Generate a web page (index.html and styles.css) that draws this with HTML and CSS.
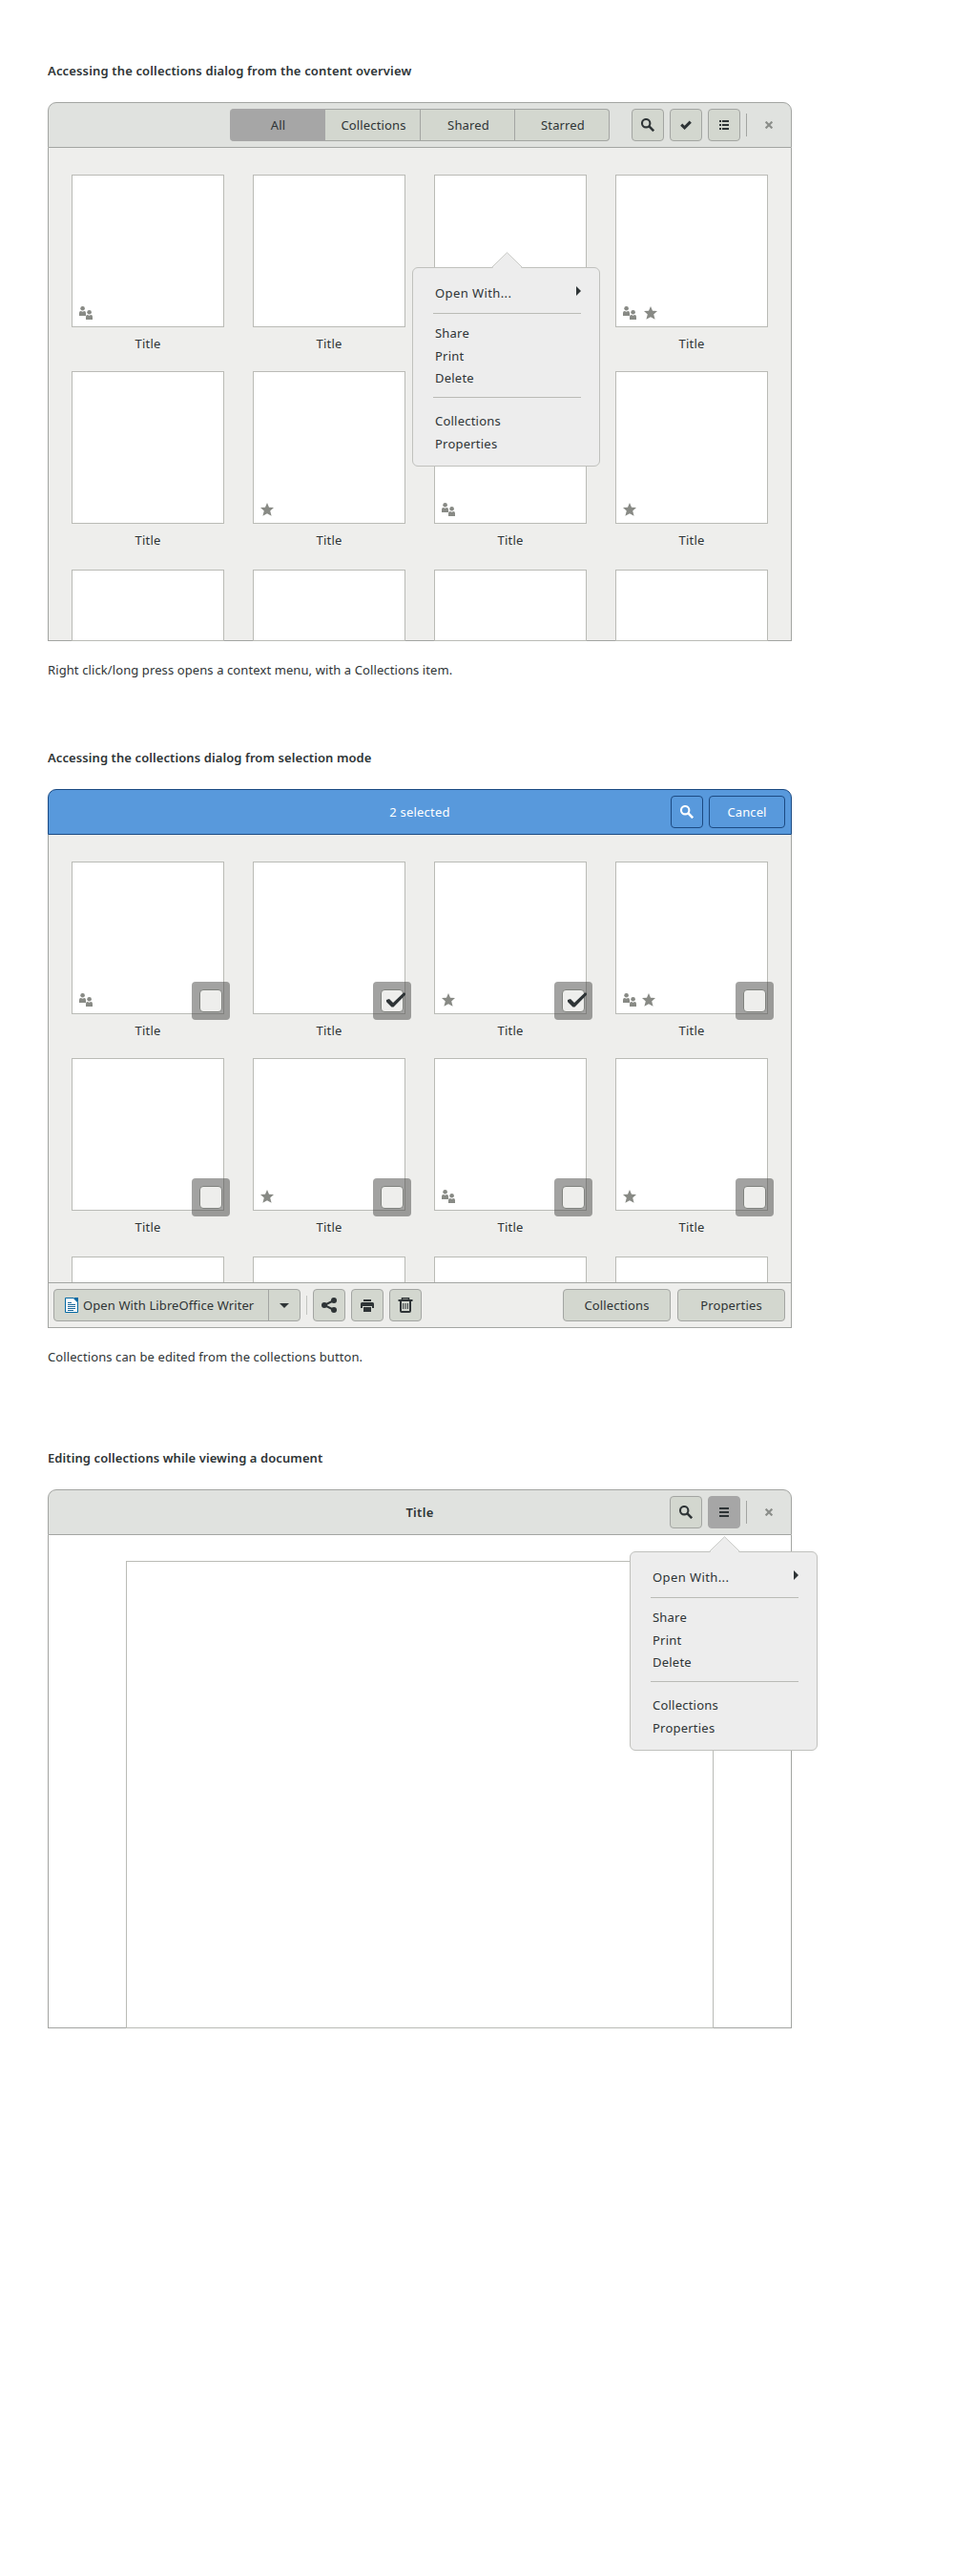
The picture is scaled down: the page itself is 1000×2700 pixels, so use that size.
FILE: index.html
```
<!DOCTYPE html>
<html lang="en">
<head>
<meta charset="utf-8">
<title>Collections dialog</title>
<link rel="stylesheet" href="styles.css">
</head>
<body>
<svg class="defs" width="0" height="0">
  <symbol id="search" viewBox="0 0 14 14"><circle cx="5.2" cy="5.2" r="4.2" fill="none" stroke="currentColor" stroke-width="2.1"/><path d="M8.2 8.2L13.200 13.200" stroke="currentColor" stroke-width="2.6"/></symbol>
  <symbol id="check" viewBox="0 0 12 10"><path d="M1.2 4.6L4.6 7.8L10.8 1.6" fill="none" stroke="currentColor" stroke-width="3"/></symbol>
  <symbol id="list" viewBox="0 0 10 10"><path d="M0 0h2v2H0zM3 0h7v2H3zM0 4h2v2H0zM3 4h7v2H3zM0 8h2v2H0zM3 8h7v2H3z" fill="currentColor"/></symbol>
  <symbol id="menu" viewBox="0 0 10 10"><path d="M0 0h10v2H0zM0 4h10v2H0zM0 8h10v2H0z" fill="currentColor"/></symbol>
  <symbol id="close" viewBox="0 0 8 8"><path d="M.6 .6L7.4 7.4M7.4 .6L.6 7.4" stroke="currentColor" stroke-width="2.2"/></symbol>
  <symbol id="people" viewBox="0 0 14 14"><g fill="currentColor"><circle cx="3.6" cy="2.3" r="2.3"/><path d="M0 10V7q0-2 1.800-2l1.800.7L5.400 5q1.600 0 1.600 2v3z"/><circle cx="10.600" cy="6.300" r="2.300"/><path d="M7 14v-3q0-2 1.800-2l1.800.7L12.400 9q1.600 0 1.600 2v3z"/></g></symbol>
  <symbol id="star" viewBox="0 0 14 14"><path d="M7 0l2 4.800 5 .3-3.800 3.300L11.600 13.800 7 11.200 2.400 13.800 3.800 8.400 0 5.100l5-.3z" fill="currentColor"/></symbol>
  <symbol id="tick" viewBox="0 0 20 16"><path d="M0 8l3-1 4 4L18 .5l2 .3v2L7.500 15.500H5.500L0 10z" fill="currentColor"/></symbol>
  <symbol id="share" viewBox="0 0 16 16"><path d="M13 3L3 8l10 5" fill="none" stroke="currentColor" stroke-width="2"/><g fill="currentColor"><circle cx="3" cy="8" r="3"/><circle cx="13" cy="3" r="3"/><circle cx="13" cy="13" r="3"/></g></symbol>
  <symbol id="print" viewBox="0 0 14 13"><g fill="currentColor"><path d="M3 0h8v2H3z"/><path d="M1.500 3h11Q14 3 14 4.500V9h-2V7H2v2H0V4.500Q0 3 1.500 3z"/><path d="M3 8h8v5H3z"/></g></symbol>
  <symbol id="trash" viewBox="0 0 16 16"><g fill="none" stroke="currentColor"><path d="M.5 3h15" stroke-width="2"/><path d="M4.500 2.500V.75h7V2.500" stroke-width="1.500"/><path d="M3 4v10q0 1 1 1h8q1 0 1-1V4" stroke-width="2"/><path d="M5.700 6v6M8 6v6M10.300 6v6"/></g></symbol>
  <symbol id="writer" viewBox="0 0 14 16"><path d="M.5.5H9L13.500 5v10.500H.5z" fill="#fff" stroke="#0369a3"/><path d="M9.500 0H14v4.500zM9.500 0v1l3.500 3.500h1z" fill="#0369a3"/><path d="M3 5.500h4M3 7.500h8M3 9.500h8M3 11.500h8M3 13.500h6" stroke="#18679a"/></symbol>
  <symbol id="tip" viewBox="0 0 33 18"><path d="M1 17L16.500 1.200 32 17v1H1z" fill="#ededed"/><path d="M.5 16.500L16.500 .8 32.500 16.500" fill="none" stroke="#c3c4c0"/></symbol>
</svg>

<section class="scene">
  <h2 class="loose">Accessing the collections dialog from the content overview</h2>
  <div class="window">
    <header class="bar">
      <span></span>
      <nav class="tabs"><b class="on">All</b><b>Collections</b><b>Shared</b><b>Starred</b></nav>
      <div class="tools">
        <span class="btn icon"><svg width="14" height="14"><use href="#search"/></svg></span>
        <span class="btn icon"><svg width="12" height="10"><use href="#check"/></svg></span>
        <span class="btn icon"><svg width="10" height="10"><use href="#list"/></svg></span>
        <i class="sep"></i>
        <span class="close"><svg width="8" height="8"><use href="#close"/></svg></span>
      </div>
    </header>
    <div class="content grid">
      <div class="item"><div class="thumb"><svg class="em"><use href="#people"/></svg></div><p>Title</p></div>
      <div class="item"><div class="thumb"></div><p>Title</p></div>
      <div class="item"><div class="thumb"></div></div>
      <div class="item"><div class="thumb wide"><svg class="em"><use href="#people"/></svg><svg class="em"><use href="#star"/></svg></div><p>Title</p></div>
      <div class="item"><div class="thumb"></div><p>Title</p></div>
      <div class="item"><div class="thumb"><svg class="em"><use href="#star"/></svg></div><p>Title</p></div>
      <div class="item"><div class="thumb"><svg class="em"><use href="#people"/></svg></div><p>Title</p></div>
      <div class="item"><div class="thumb"><svg class="em"><use href="#star"/></svg></div><p>Title</p></div>
      <div class="thumb cut"></div><div class="thumb cut"></div><div class="thumb cut"></div><div class="thumb cut"></div>
    </div>
    <div class="popover over-item">
      <svg class="tip"><use href="#tip"/></svg>
      <div class="entry first">Open With...<i class="sub"></i></div>
      <hr>
      <div class="entry">Share</div><div class="entry">Print</div><div class="entry">Delete</div>
      <hr class="second">
      <div class="entry">Collections</div><div class="entry">Properties</div>
    </div>
  </div>
  <p class="note">Right click/long press opens a context menu, with a Collections item.</p>
</section>

<section class="scene">
  <h2>Accessing the collections dialog from selection mode</h2>
  <div class="window">
    <header class="bar selection">
      <span></span>
      <span>2 selected</span>
      <div class="tools">
        <span class="btn icon"><svg width="14" height="14"><use href="#search"/></svg></span>
        <span class="btn cancel">Cancel</span>
      </div>
    </header>
    <div class="content grid short">
      <div class="item"><div class="thumb"><svg class="em"><use href="#people"/></svg><span class="pick"><i></i></span></div><p>Title</p></div>
      <div class="item"><div class="thumb"><span class="pick"><i></i><svg class="tick"><use href="#tick"/></svg></span></div><p>Title</p></div>
      <div class="item"><div class="thumb"><svg class="em"><use href="#star"/></svg><span class="pick"><i></i><svg class="tick"><use href="#tick"/></svg></span></div><p>Title</p></div>
      <div class="item"><div class="thumb"><svg class="em"><use href="#people"/></svg><svg class="em"><use href="#star"/></svg><span class="pick"><i></i></span></div><p>Title</p></div>
      <div class="item"><div class="thumb"><span class="pick"><i></i></span></div><p>Title</p></div>
      <div class="item"><div class="thumb"><svg class="em"><use href="#star"/></svg><span class="pick"><i></i></span></div><p>Title</p></div>
      <div class="item"><div class="thumb"><svg class="em"><use href="#people"/></svg><span class="pick"><i></i></span></div><p>Title</p></div>
      <div class="item"><div class="thumb"><svg class="em"><use href="#star"/></svg><span class="pick"><i></i></span></div><p>Title</p></div>
      <div class="thumb cut"></div><div class="thumb cut"></div><div class="thumb cut"></div><div class="thumb cut"></div>
    </div>
    <footer class="actions">
      <span class="btn open"><span class="app"><svg width="14" height="16"><use href="#writer"/></svg>Open With LibreOffice Writer</span><span class="drop"><i></i></span></span>
      <i class="sep"></i>
      <span class="btn icon"><svg width="16" height="16"><use href="#share"/></svg></span>
      <span class="btn icon"><svg width="14" height="13"><use href="#print"/></svg></span>
      <span class="btn icon"><svg width="16" height="16"><use href="#trash"/></svg></span>
      <span class="btn action push">Collections</span>
      <span class="btn action">Properties</span>
    </footer>
  </div>
  <p class="note">Collections can be edited from the collections button.</p>
</section>

<section class="scene">
  <h2>Editing collections while viewing a document</h2>
  <div class="window">
    <header class="bar">
      <span></span>
      <strong>Title</strong>
      <div class="tools">
        <span class="btn icon"><svg width="14" height="14"><use href="#search"/></svg></span>
        <span class="btn icon on"><svg width="10" height="10"><use href="#menu"/></svg></span>
        <i class="sep"></i>
        <span class="close"><svg width="8" height="8"><use href="#close"/></svg></span>
      </div>
    </header>
    <div class="content viewer"><div class="page"></div></div>
    <div class="popover over-menu">
      <svg class="tip"><use href="#tip"/></svg>
      <div class="entry first">Open With...<i class="sub"></i></div>
      <hr>
      <div class="entry">Share</div><div class="entry">Print</div><div class="entry">Delete</div>
      <hr class="second">
      <div class="entry">Collections</div><div class="entry">Properties</div>
    </div>
  </div>
</section>
</body>
</html>
```
FILE: styles.css
```
* { box-sizing: border-box; }

body {
  margin: 0;
  min-height: 2700px;
  padding: 65px 50px 0;
  background: #fff;
  color: #2e3436;
  font: 13px/18px "Noto Sans", "Open Sans", sans-serif;
  letter-spacing: .1px;
  display: flex;
  flex-direction: column;
}
svg { display: block; flex: none; }
.defs { position: absolute; }
h2, p { margin: 0; font-size: 13px; }
h2 { font-weight: 600; letter-spacing: .09px; margin-bottom: 24px; }
.loose { letter-spacing: .155px; }
strong { font-weight: 600; letter-spacing: .3px; }
.scene:nth-of-type(2) { margin-top: 74px; }
.scene:nth-of-type(3) { margin-top: 88px; }
.note { margin-top: 21px; }

.window { position: relative; width: 780px; height: 565px; }

.bar {
  height: 48px;
  padding: 0 6px;
  border: 1px solid #a3a5a2;
  border-radius: 9px 9px 0 0;
  background: #e0e2df;
  display: grid;
  grid-template-columns: 1fr auto 1fr;
  align-items: center;
}
.tools { display: flex; align-items: center; justify-content: flex-end; gap: 6px; }

.btn {
  height: 34px;
  border: 1px solid #a3a5a2;
  border-radius: 4px;
  background: #d3d7cf;
  display: flex;
  align-items: center;
  justify-content: center;
}
.icon { width: 34px; }
.on { background: #a6a6a6; border-color: #a6a6a6; }
.sep { width: 1px; height: 24px; background: #a3a5a2; }
.close { width: 34px; display: flex; justify-content: center; color: #8b8e8a; }

.tabs {
  height: 34px;
  display: grid;
  grid-template-columns: 100px 100px 99px 99px;
}
.tabs b {
  padding-left: 2px;
  font-weight: 400;
  line-height: 32px;
  letter-spacing: .15px;
  text-align: center;
  background: #d3d7cf;
  border: 1px solid #a3a5a2;
  border-left: 0;
}
.tabs .on { background: #a6a6a6; border-color: #a6a6a6; border-radius: 4px 0 0 4px; }
.tabs b:last-child { border-radius: 0 4px 4px 0; }

.selection { background: #5899dc; border-color: #1c4a82; color: #fff; }
.selection .btn { background: none; border-color: #1c4a82; }
.selection > span { letter-spacing: .2px; }
.cancel { width: 80px; }

.content {
  height: 517px;
  border: 1px solid #a3a5a2;
  border-top: 0;
  background: #eeeeec;
}
.grid {
  padding: 28px 24px 0;
  display: grid;
  grid-template-columns: repeat(4, 160px);
  grid-template-rows: 206px 208px 75px;
  column-gap: 30px;
}
.item p { margin-top: 8px; text-align: center; letter-spacing: .2px; }
.thumb {
  position: relative;
  height: 160px;
  padding: 0 7px 7px;
  border: 1px solid #babbb6;
  background: #fff;
  display: flex;
  align-items: flex-end;
  gap: 6px;
}
.wide { gap: 8px; }
.cut { height: 75px; }
.em { width: 14px; height: 14px; color: #888a85; }

.pick {
  position: absolute;
  right: -7px;
  bottom: -7px;
  width: 40px;
  height: 40px;
  border-radius: 4px;
  background: rgba(70, 70, 68, .5);
}
.pick i {
  display: block;
  width: 24px;
  height: 24px;
  margin: 8px;
  border: 1px solid #80827e;
  border-radius: 4px;
  background: #eeeeec;
}
.tick { position: absolute; left: 14px; top: 11px; width: 20px; height: 16px; }

.short { height: 469px; overflow: hidden; border-bottom: 0; }
.actions {
  height: 48px;
  padding: 0 6px 0 5px;
  border: 1px solid #a3a5a2;
  background: #eeeeec;
  display: flex;
  align-items: center;
  gap: 6px;
}
.actions .sep { height: 20px; background: #c2c4c0; }
.open { width: 259px; }
.app { width: 224px; padding-left: 11px; display: flex; align-items: center; gap: 5px; }
.drop {
  align-self: stretch;
  flex: 1;
  border-left: 1px solid #a3a5a2;
  display: flex;
  align-items: center;
  justify-content: center;
}
.drop i { border: solid transparent; border-width: 5px 5px 0; border-top-color: #2e3436; }
.action { width: 113px; letter-spacing: .15px; }
.push { margin: 0 1px 0 auto; }

.popover {
  position: absolute;
  width: 197px;
  height: 209px;
  padding: 17px 19px 0 21px;
  border: 1px solid #c0c1bd;
  border-radius: 6px;
  background: #ededed;
}
.over-item { left: 382px; top: 173px; }
.over-menu { left: 610px; top: 65px; }
.tip { position: absolute; left: 82px; top: -17px; width: 33px; height: 18px; }
.entry { height: 23.5px; padding-left: 2px; letter-spacing: .22px; }
.first { height: 30px; display: flex; justify-content: space-between; letter-spacing: .4px; }
.sub { height: 10px; margin-top: 2px; border: solid transparent; border-width: 5px 0 5px 5px; border-left-color: #2e3436; }
.popover hr { height: 1px; margin: 0 0 11px; border: 0; background: #babbb6; }
.popover .second { margin: 5.5px 0 15px; }

.viewer { background: #fff; padding: 27px 81px 0; }
.page { height: 490px; width: 616px; border: 1px solid #babbb6; }
```
